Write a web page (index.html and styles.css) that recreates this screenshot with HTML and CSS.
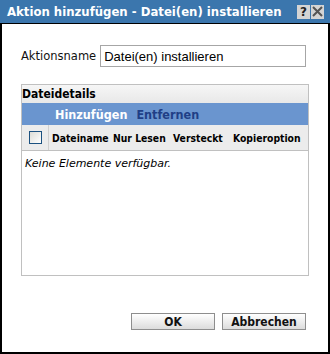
FILE: index.html
```html
<!DOCTYPE html>
<html lang="de">
<head>
    <meta charset="UTF-8">
    <title>Aktion hinzufügen - Datei(en) installieren</title>
    <link rel="stylesheet" href="styles.css">
</head>
<body>

<div class="dialog">
    <div class="titlebar">
        <span class="title">Aktion hinzufügen - Datei(en) installieren</span>
        <div class="title-buttons">
            <span class="tb-btn">?</span>
            <span class="tb-btn">
                <svg width="11" height="11" viewBox="0 0 11 11"><path d="M1 1 L10 10 M10 1 L1 10" stroke="#555" stroke-width="2"/></svg>
            </span>
        </div>
    </div>

    <div class="content">
        <div class="field-row">
            <label class="field-label" for="aktionsname">Aktionsname</label>
            <input class="field-input" id="aktionsname" type="text" value="Datei(en) installieren">
        </div>

        <!-- Dateidetails panel -->
        <div class="panel">
            <div class="panel-head">Dateidetails</div>
            <div class="toolbar">
                <span class="tool active">Hinzufügen</span>
                <span class="tool">Entfernen</span>
            </div>
            <div class="col-head">
                <div class="check-cell"><span class="check"></span></div>
                <span class="col">Dateiname</span>
                <span class="col">Nur Lesen</span>
                <span class="col">Versteckt</span>
                <span class="col">Kopieroption</span>
            </div>
            <div class="empty">Keine Elemente verfügbar.</div>
        </div>

        <div class="buttons">
            <button class="btn">OK</button>
            <button class="btn">Abbrechen</button>
        </div>
    </div>
</div>

</body>
</html>
```

FILE: styles.css
```css
body {
    margin: 0;
    padding: 0;
    font-family: 'DejaVu Sans', sans-serif;
    background-color: #ffffff;
}

.dialog {
    width: 330px;
    height: 354px;
    display: flex;
    flex-direction: column;
}

.titlebar {
    height: 23px;
    background-color: #3b76ad;
    border-bottom: 1px solid #000;
    display: flex;
    align-items: center;
    justify-content: space-between;
    padding: 0 6px 0 7px;
}

.title {
    color: #fff;
    font-family: 'DejaVu Sans Condensed', 'DejaVu Sans', sans-serif;
    font-stretch: condensed;
    font-weight: bold;
    font-size: 13px;
}

.title-buttons {
    display: flex;
    gap: 1px;
}

.tb-btn {
    width: 13px;
    height: 14px;
    background-color: #d4d4d4;
    color: #222;
    font-weight: bold;
    font-size: 12px;
    display: flex;
    align-items: center;
    justify-content: center;
}

.content {
    flex: 1;
    border: 2px solid #000;
    border-top: none;
    padding: 0 19px 0 19px;
    display: flex;
    flex-direction: column;
}

.field-row {
    display: flex;
    align-items: center;
    margin-top: 21px;
    gap: 4px;
}

.field-label {
    font-size: 11.5px;
    color: #111;
}

.field-input {
    width: 198px;
    height: 16px;
    border: 1px solid #a6a6a6;
    padding: 2px 3px;
    font-family: 'Liberation Sans', Arial, sans-serif;
    font-size: 13px;
    color: #000;
    margin: 0;
}

.panel {
    margin-top: 17px;
    border: 1px solid #c0c0c0;
    height: 190px;
    display: flex;
    flex-direction: column;
}

.panel-head {
    height: 18px;
    line-height: 18px;
    background: linear-gradient(#f6f6f6, #e8e8e8);
    font-family: 'DejaVu Sans Condensed', 'DejaVu Sans', sans-serif;
    font-stretch: condensed;
    font-weight: bold;
    font-size: 12px;
    color: #000;
}

.toolbar {
    height: 22px;
    background-color: #6a95cf;
    display: flex;
    align-items: center;
    gap: 9px;
    padding-left: 33px;
}

.tool {
    font-family: 'DejaVu Sans Condensed', 'DejaVu Sans', sans-serif;
    font-stretch: condensed;
    font-weight: bold;
    font-size: 12.5px;
    color: #1f3f86;
}

.tool.active {
    color: #fff;
}

.col-head {
    height: 25px;
    background-color: #ececec;
    border-bottom: 1px solid #c0c0c0;
    display: grid;
    grid-template-columns: 30px 61px 60px 60px 1fr;
    align-items: center;
}

.check-cell {
    width: 26px;
    height: 100%;
    border-right: 1px solid #d0d0d0;
    display: flex;
    align-items: center;
    justify-content: center;
}

.check {
    width: 11px;
    height: 11px;
    border: 1px solid #1c5180;
    background: linear-gradient(135deg, #dcdcd6, #ffffff);
}

.col {
    font-family: 'DejaVu Sans Condensed', 'DejaVu Sans', sans-serif;
    font-stretch: condensed;
    font-weight: bold;
    font-size: 10.3px;
    color: #000;
    white-space: nowrap;
}

.empty {
    padding: 6px 0 0 3px;
    font-style: italic;
    font-size: 11px;
    color: #000;
}

.buttons {
    display: flex;
    justify-content: flex-end;
    gap: 7px;
    margin-top: 37px;
    padding-right: 3px;
}

.btn {
    width: 84px;
    height: 17px;
    padding: 0;
    border: 1px solid #8e8e8e;
    background: linear-gradient(#ffffff, #dcdcdc);
    font-family: 'DejaVu Sans Condensed', 'DejaVu Sans', sans-serif;
    font-stretch: condensed;
    font-weight: bold;
    font-size: 12px;
    color: #111;
}
```
